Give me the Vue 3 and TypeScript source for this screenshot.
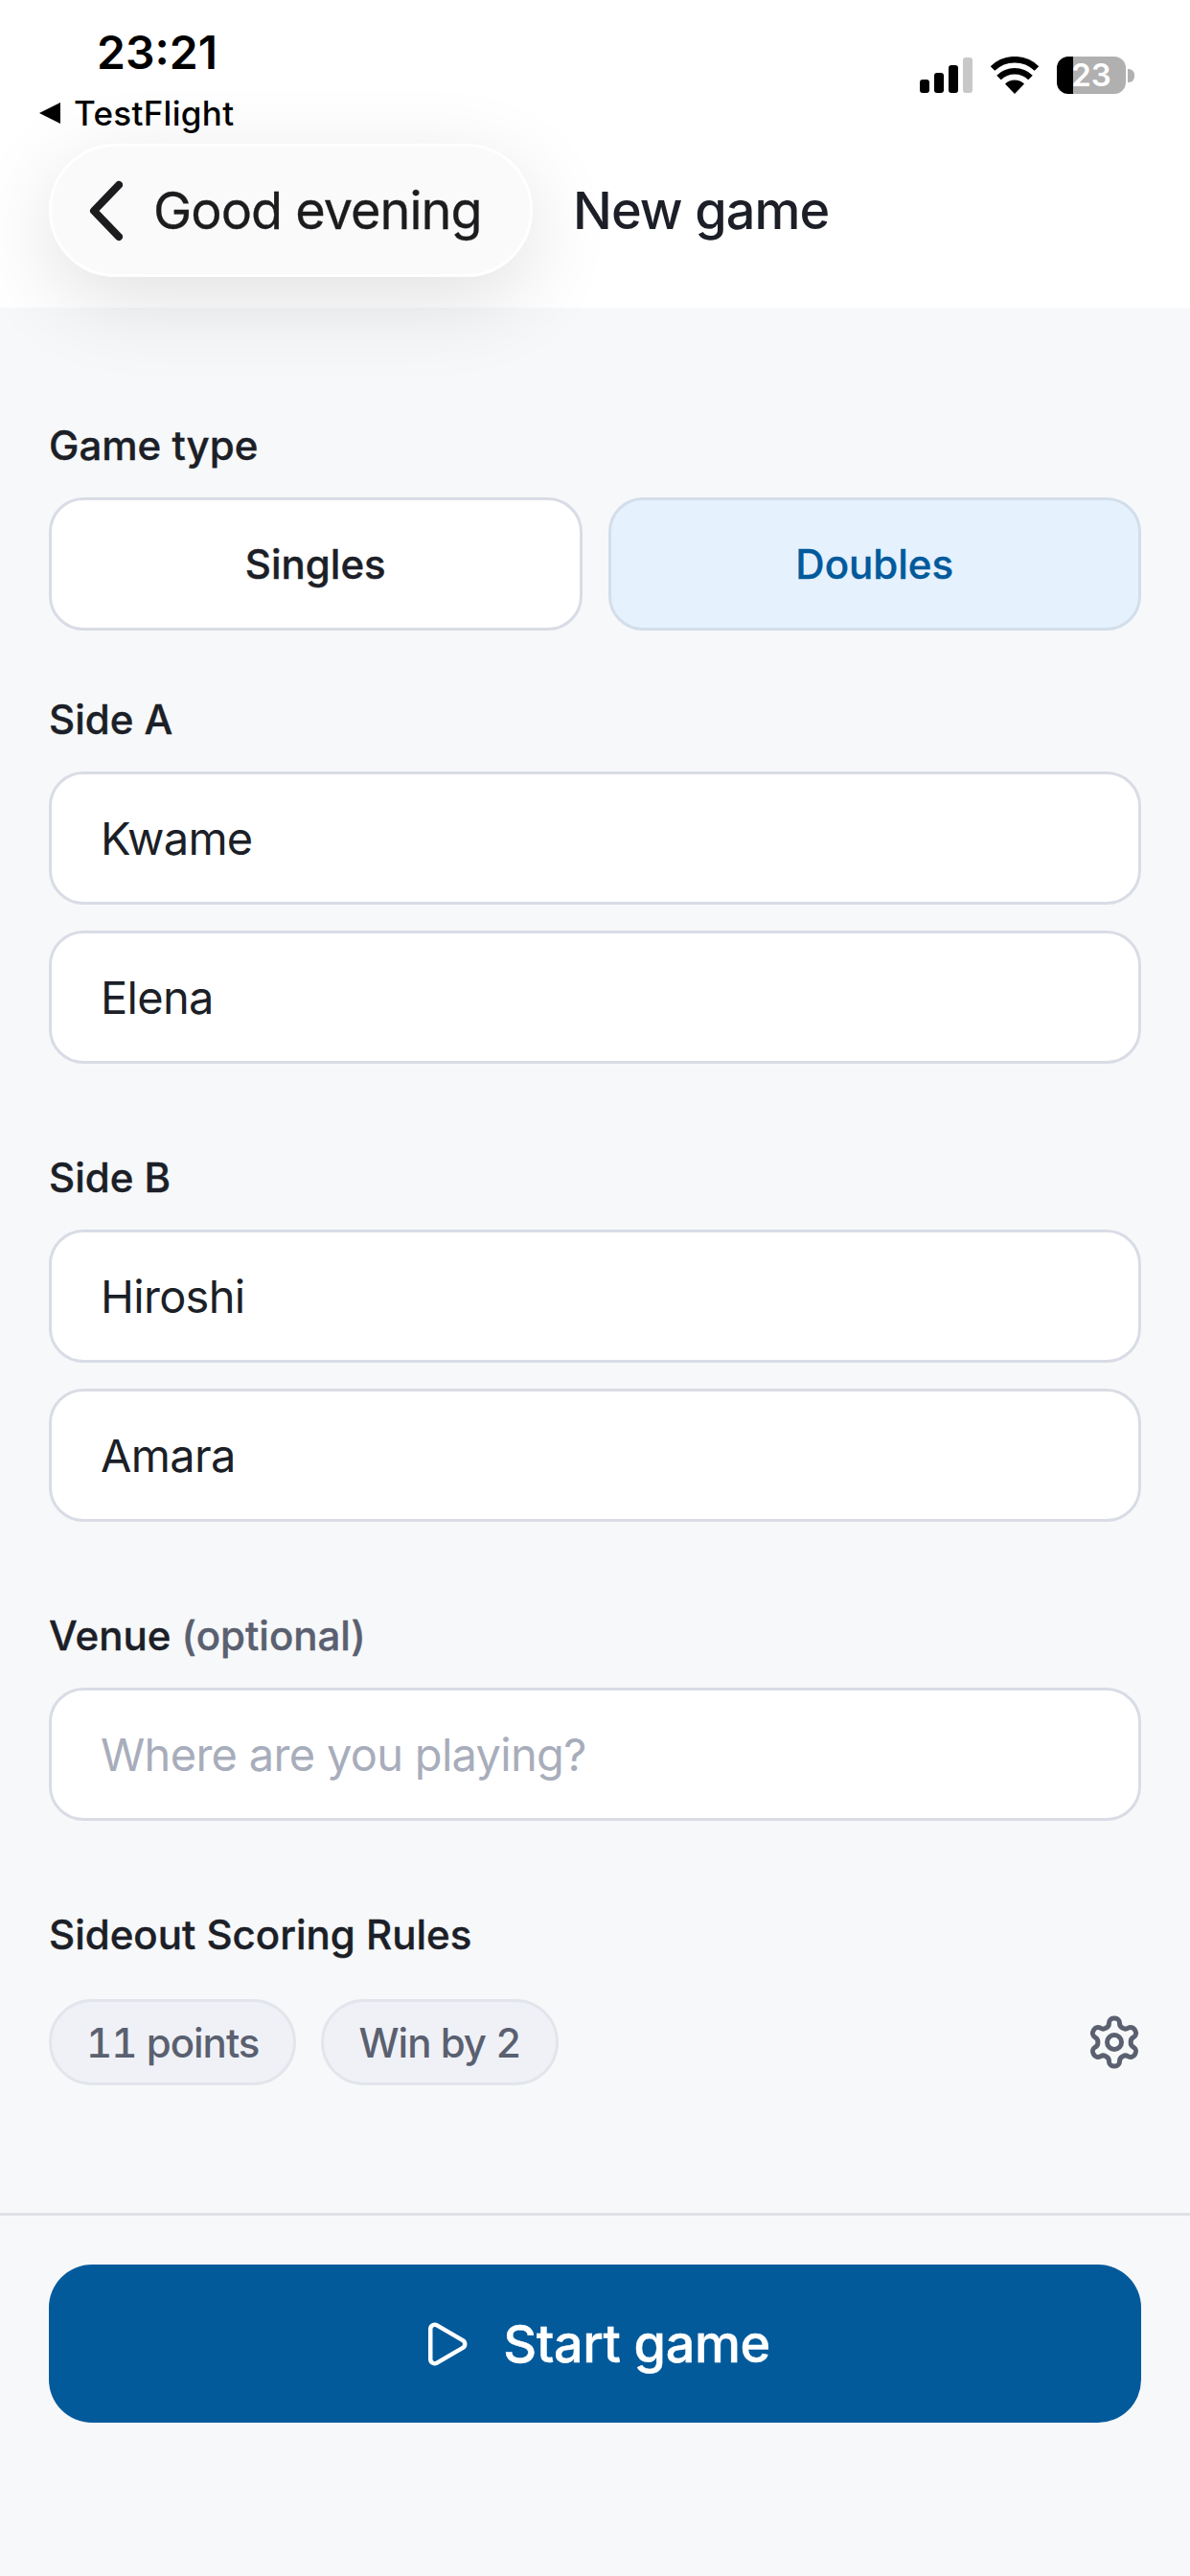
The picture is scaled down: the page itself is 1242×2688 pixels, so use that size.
<template>
  <div class="page">
    <header class="top">
      <div class="status-bar">
        <div class="status-left">
          <span class="time">23:21</span>
          <span class="back-app"><i class="back-tri"></i>TestFlight</span>
        </div>
        <div class="status-right">
          <svg class="signal" width="55" height="37" viewBox="0 0 55 37">
            <rect x="0" y="23" width="10" height="14" rx="3" fill="#000" />
            <rect x="15" y="16" width="10" height="21" rx="3" fill="#000" />
            <rect x="30" y="8" width="10" height="29" rx="3" fill="#000" />
            <rect x="45" y="0" width="10" height="37" rx="3" fill="#c8c8c8" />
          </svg>
          <svg class="wifi" width="52" height="39" viewBox="0 0 52 39">
            <path d="M26 39 16 28.5a14.5 14.5 0 0 1 20 0z" fill="#000" />
            <path d="M9.5 22a23.5 23.5 0 0 1 33 0" fill="none" stroke="#000" stroke-width="6.5" />
            <path d="M3 12.5a33 33 0 0 1 46 0" fill="none" stroke="#000" stroke-width="6.5" />
          </svg>
          <div class="battery">
            <div class="battery-body">23</div>
            <i class="battery-cap"></i>
          </div>
        </div>
      </div>
      <div class="nav">
        <button class="back-pill">
          <svg width="36" height="64" viewBox="0 0 36 64">
            <path d="M32 5 6 32l26 27" fill="none" stroke="#1c1c1e" stroke-width="8" stroke-linecap="round" stroke-linejoin="round" />
          </svg>
          <span>Good evening</span>
        </button>
        <h1 class="title">New game</h1>
      </div>
    </header>

    <main class="form">
      <section>
        <div class="label">Game type</div>
        <div class="type-row">
          <button
            v-for="t in gameTypes"
            :key="t"
            class="type-btn"
            :class="{ selected: gameType === t }"
            @click="gameType = t"
          >
            {{ t }}
          </button>
        </div>
      </section>

      <section class="side-a">
        <div class="label">Side A</div>
        <div class="inputs">
          <input v-model="sideA[0]" class="field" />
          <input v-model="sideA[1]" class="field" />
        </div>
      </section>

      <section class="spaced">
        <div class="label">Side B</div>
        <div class="inputs">
          <input v-model="sideB[0]" class="field" />
          <input v-model="sideB[1]" class="field" />
        </div>
      </section>

      <section class="spaced">
        <div class="label">Venue <span class="muted">(optional)</span></div>
        <input v-model="venue" class="field" placeholder="Where are you playing?" />
      </section>

      <section class="spaced">
        <div class="label rules-label">Sideout Scoring Rules</div>
        <div class="rules-row">
          <span class="chip">11 points</span>
          <span class="chip">Win by 2</span>
          <svg class="gear" width="60" height="60" viewBox="0 0 24 24" fill="none" stroke="#5a6070" stroke-width="2" stroke-linecap="round" stroke-linejoin="round">
            <path d="M12.22 2h-.44a2 2 0 0 0-2 2v.18a2 2 0 0 1-1 1.73l-.43.25a2 2 0 0 1-2 0l-.15-.08a2 2 0 0 0-2.73.73l-.22.38a2 2 0 0 0 .73 2.73l.15.1a2 2 0 0 1 1 1.72v.51a2 2 0 0 1-1 1.74l-.15.09a2 2 0 0 0-.73 2.73l.22.38a2 2 0 0 0 2.73.73l.15-.08a2 2 0 0 1 2 0l.43.25a2 2 0 0 1 1 1.73V20a2 2 0 0 0 2 2h.44a2 2 0 0 0 2-2v-.18a2 2 0 0 1 1-1.73l.43-.25a2 2 0 0 1 2 0l.15.08a2 2 0 0 0 2.73-.73l.22-.39a2 2 0 0 0-.73-2.73l-.15-.08a2 2 0 0 1-1-1.74v-.5a2 2 0 0 1 1-1.74l.15-.09a2 2 0 0 0 .73-2.73l-.22-.38a2 2 0 0 0-2.73-.73l-.15.08a2 2 0 0 1-2 0l-.43-.25a2 2 0 0 1-1-1.73V4a2 2 0 0 0-2-2z" />
            <circle cx="12" cy="12" r="3" />
          </svg>
        </div>
      </section>
    </main>

    <footer class="footer">
      <button class="start-btn">
        <svg width="54" height="54" viewBox="0 0 24 24" fill="none" stroke="#fff" stroke-width="2" stroke-linecap="round" stroke-linejoin="round">
          <path d="M5 5a2 2 0 0 1 3.008-1.728l11.997 6.998a2 2 0 0 1 .003 3.458l-12 7A2 2 0 0 1 5 19z" />
        </svg>
        <span>Start game</span>
      </button>
    </footer>
  </div>
</template>

<script setup lang="ts">
import { ref } from 'vue';

const gameTypes = ['Singles', 'Doubles'];
const gameType = ref('Doubles');
const sideA = ref(['Kwame', 'Elena']);
const sideB = ref(['Hiroshi', 'Amara']);
const venue = ref('');
</script>

<style>
html,
body {
  margin: 0;
  background: #f7f8fa;
}
</style>

<style scoped>
.page {
  width: 1242px;
  height: 2688px;
  display: flex;
  flex-direction: column;
  background: #f7f8fa;
  font-family: Inter, "Liberation Sans", sans-serif;
  color: #1c1f27;
  overflow: hidden;
}

* {
  box-sizing: border-box;
}

button,
input {
  font-family: inherit;
}

.top {
  height: 321px;
  flex-shrink: 0;
  background: #fff;
}

.status-bar {
  height: 150px;
  display: flex;
  justify-content: space-between;
  position: relative;
  z-index: 2;
}

.status-left {
  display: flex;
  flex-direction: column;
  padding-left: 41px;
  padding-top: 25px;
}

.time {
  font-size: 48px;
  line-height: 60px;
  font-weight: 600;
  color: #000;
  padding-left: 60px;
}

.back-app {
  display: flex;
  align-items: center;
  gap: 14px;
  margin-top: 13px;
  font-size: 35px;
  line-height: 40px;
  font-weight: 500;
  letter-spacing: 0.3px;
  color: #000;
}

.back-tri {
  width: 0;
  height: 0;
  border-top: 11px solid transparent;
  border-bottom: 11px solid transparent;
  border-right: 22px solid #000;
}

.status-right {
  display: flex;
  align-items: flex-start;
  padding-top: 59px;
  padding-right: 58px;
}

.signal {
  margin-top: 1px;
  margin-right: 18px;
}

.wifi {
  margin-right: 18px;
}

.battery {
  display: flex;
  align-items: center;
}

.battery-body {
  width: 72px;
  height: 39px;
  border-radius: 12px;
  background: linear-gradient(to right, #000 17px, #b0b0b0 17px);
  color: #fff;
  font-size: 33px;
  font-weight: 600;
  line-height: 39px;
  text-align: center;
}

.battery-cap {
  width: 7px;
  height: 14px;
  margin-left: 2px;
  border-radius: 0 6px 6px 0;
  background: #b0b0b0;
}

.nav {
  display: flex;
  align-items: center;
  gap: 42px;
  padding-left: 51px;
}

.back-pill {
  width: 505px;
  height: 139px;
  display: flex;
  align-items: center;
  gap: 32px;
  padding: 0 0 0 38px;
  border: 3px solid #fff;
  border-radius: 70px;
  background: #fafafa;
  box-shadow: 0 24px 90px rgba(0, 0, 0, 0.12);
  font-size: 54px;
  font-weight: 400;
  letter-spacing: -1px;
  -webkit-text-stroke: 0.3px currentColor;
  color: #1c1c1e;
}

.title {
  margin: 0;
  font-size: 54px;
  font-weight: 500;
  letter-spacing: -0.9px;
  color: #1c1f27;
}

.form {
  flex: 1;
  padding: 120px 51px 0;
}

.label {
  font-size: 42px;
  line-height: 48px;
  font-weight: 500;
  margin-bottom: 30px;
  -webkit-text-stroke: 0.4px currentColor;
}

.rules-label {
  margin-bottom: 43px;
}

.muted {
  color: #5a6070;
}

.type-row {
  display: grid;
  grid-template-columns: 1fr 1fr;
  gap: 27px;
}

.type-btn {
  height: 139px;
  border: 3px solid #d9dce5;
  border-radius: 36px;
  background: #fff;
  font-size: 42px;
  font-weight: 500;
  -webkit-text-stroke: 0.4px currentColor;
  color: #1c1f27;
}

.type-btn.selected {
  background: #e6f1fe;
  border-color: #d3deea;
  color: #005a9c;
}

.side-a {
  margin-top: 69px;
}

.spaced {
  margin-top: 95px;
}

.inputs {
  display: flex;
  flex-direction: column;
  gap: 27px;
}

.field {
  display: block;
  width: 100%;
  height: 139px;
  padding: 0 51px;
  border: 3px solid #d9dce5;
  border-radius: 36px;
  background: #fff;
  font-size: 47px;
  letter-spacing: -0.7px;
  color: #1c1f27;
  outline: none;
}

.field::placeholder {
  color: #a8adbb;
}

.rules-row {
  display: flex;
  align-items: center;
  gap: 26px;
}

.chip {
  height: 90px;
  display: flex;
  align-items: center;
  padding: 0 36px;
  border: 3px solid #e2e5eb;
  border-radius: 45px;
  background: #eff1f6;
  font-size: 42px;
  font-weight: 500;
  font-variant-numeric: tabular-nums;
  letter-spacing: -1px;
  color: #5a6070;
}

.gear {
  margin-left: auto;
  margin-right: -2px;
}

.footer {
  height: 379px;
  flex-shrink: 0;
  padding: 51px 51px 0;
  border-top: 3px solid #dfe1e8;
}

.start-btn {
  width: 100%;
  height: 165px;
  display: flex;
  align-items: center;
  justify-content: center;
  gap: 33px;
  border: none;
  border-radius: 45px;
  background: #035a9b;
  color: #fff;
  font-size: 54px;
  font-weight: 500;
  -webkit-text-stroke: 0.5px currentColor;
  letter-spacing: -0.4px;
}
</style>
